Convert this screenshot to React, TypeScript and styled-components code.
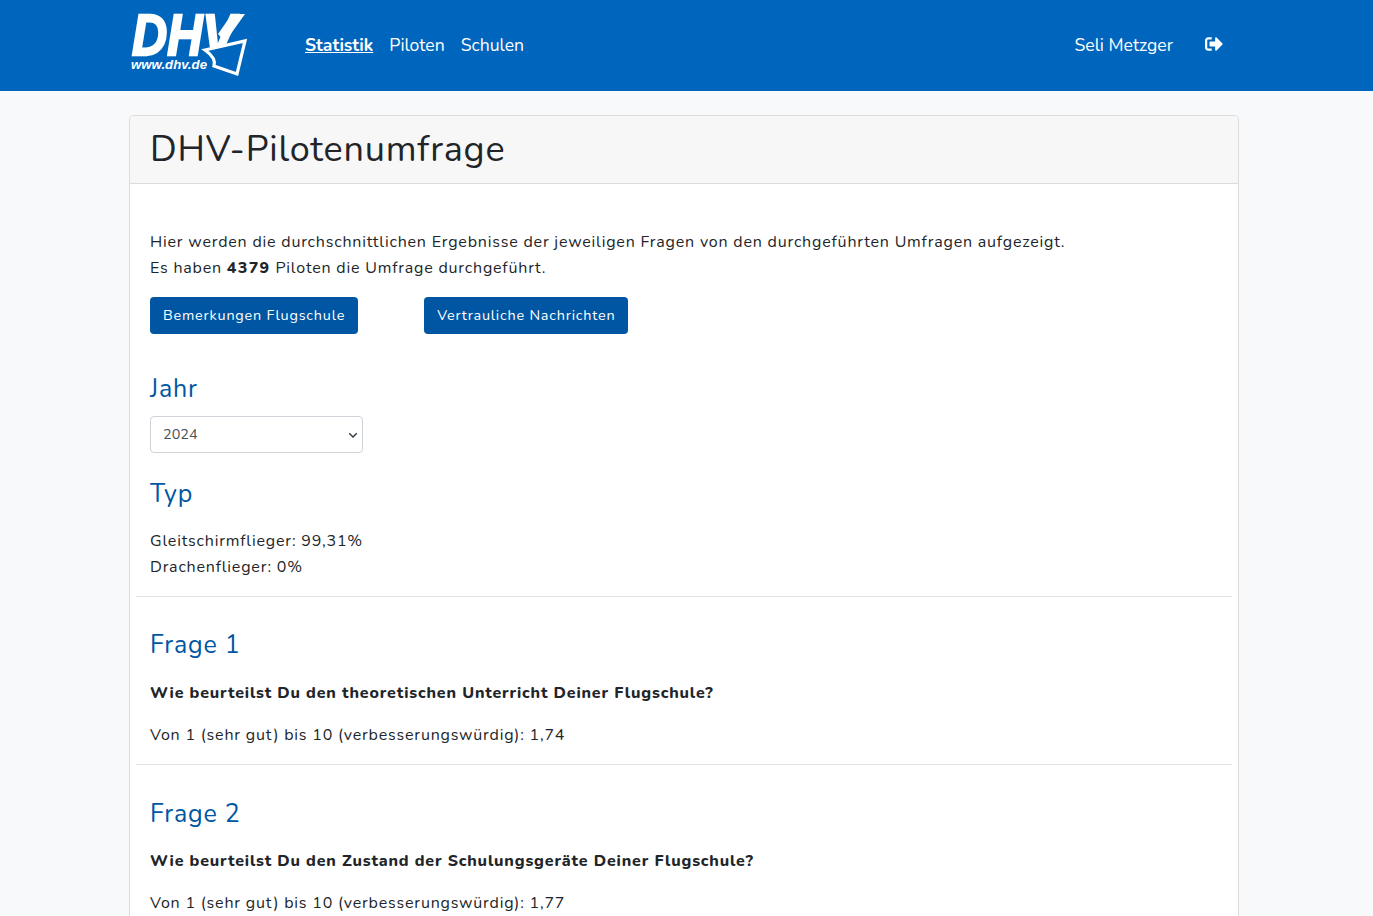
import React from "react";
import styled, { createGlobalStyle } from "styled-components";
import { FaSignOutAlt } from "react-icons/fa";

const Global = createGlobalStyle`
  html, body { margin: 0; padding: 0; background: #f8f9fa; height: 916px; overflow: hidden; }
  body { font-family: "Nunito", "Noto Sans", "Open Sans", sans-serif; color: #212529; }
`;
const Nav = styled.nav`
  height: 91px; background: #0065bd; display: flex; align-items: center;
  padding: 0 150px 0 130px; box-sizing: border-box;
`;
const Logo = styled.svg`width: 120px; height: 66px; flex: none; margin-top: 2px; overflow: visible;`;
const Links = styled.div`display: flex; gap: 16px; margin-left: 55px; flex: 1; margin-top: -2px;`;
const NavLink = styled.a<{ $active?: boolean }>`
  color: #fff; font-size: 17.6px; text-decoration: ${p => p.$active ? "underline" : "none"};
  font-weight: ${p => p.$active ? 700 : 400};
`;
const User = styled.span`color: #fff; font-size: 17.6px; margin: -2px 32px 0 0;`;
const Logout = styled(FaSignOutAlt)`width: 18px; height: 18px; color: #fff; display: block; margin-top: -3px;`;
const Card = styled.main`
  margin: 24px 0 0 129px; width: 1110px; height: 900px; box-sizing: border-box; background: #fff;
  border: 1px solid #dcdcdc; border-radius: 4px 4px 0 0;
`;
const CardHeader = styled.header`
  height: 68px; box-sizing: border-box; background: #f7f7f7; border-bottom: 1px solid #dcdcdc;
  padding: 0 20px; display: flex; align-items: center; border-radius: 4px 4px 0 0;
`;
const Title = styled.h1`margin: 0; font-size: 36px; font-weight: 400; letter-spacing: 0.8px; color: #212529;`;
const CardBody = styled.div`padding: 45px 20px 0;`;
const Text = styled.p`margin: 0; font-size: 16px; line-height: 26px; letter-spacing: 0.8px; color: #212529;
  b { font-weight: 800; letter-spacing: 1.3px; }
`;
const Buttons = styled.div`display: flex; gap: 66px; margin-top: 16px;`;
const Button = styled.button`
  height: 37px; padding: 0 13px 2px; border: 0; border-radius: 4px; background: #0056a2; color: #fff;
  font: 400 14.4px "Nunito", sans-serif; letter-spacing: 0.8px;
`;
const Heading = styled.h2<{ $top: number; $after?: number }>`
  margin: ${p => p.$top}px 0 ${p => p.$after ?? -1}px; font-size: 25px; line-height: 30px; font-weight: 400; color: #0056a2; letter-spacing: 0.8px;
`;
const SelectBox = styled.div`
  width: 213px; height: 37px; box-sizing: border-box; margin-top: 13px; border: 1px solid #ced4da; border-radius: 4px;
  padding: 0 4px 2px 12px; display: flex; align-items: center; justify-content: space-between;
  font-size: 14.4px; color: #495057;
`;
const Chevron = styled.svg`width: 10px; height: 10px; fill: none; stroke: #343a40; stroke-width: 1.7; margin-top: 2px;`;
const Rule = styled.hr`margin: 16px -14px 0; border: 0; border-top: 1px solid #e2e2e2;`;
const Question = styled.p`margin: 21px 0 0; font-size: 16px; line-height: 26px; letter-spacing: 0.84px; font-weight: 800; color: #212529;`;
const Score = styled(Text)`margin-top: 16px;`;
const TypeList = styled.div`margin-top: 20px;`;

const Frage = ({ n, q, v, top = 33, after = -1 }: { n: number; q: string; v: string; top?: number; after?: number }) => (
  <section>
    <Rule />
    <Heading $top={top} $after={after}>Frage {n}</Heading>
    <Question>{q}</Question>
    <Score>Von 1 (sehr gut) bis 10 (verbesserungswürdig): {v}</Score>
  </section>
);

export default function App() {
  return (
    <>
      <Global />
      <Nav>
        <Logo viewBox="0 0 120 66">
          <text x="2" y="41" fill="#fff" stroke="#fff" strokeWidth="2.4" fontFamily="Liberation Sans" fontWeight="700" fontStyle="italic" fontSize="57" textLength="103" lengthAdjust="spacingAndGlyphs">DHV</text>
          <text x="1" y="54.500" fill="#fff" fontFamily="Liberation Sans" fontWeight="700" fontStyle="italic" fontSize="13" textLength="76" lengthAdjust="spacingAndGlyphs">www.dhv.de</text>
          <path d="M75 36 L115 27 L107 60 L84 52 C86 46 82 41 75 36 Z" fill="#0065bd" stroke="#fff" strokeWidth="3.200" strokeLinejoin="miter" />
          <path d="M95 28 L115 0 L102 0 L88 20 Z" fill="#fff" />
        </Logo>
        <Links>
          <NavLink $active>Statistik</NavLink>
          <NavLink>Piloten</NavLink>
          <NavLink>Schulen</NavLink>
        </Links>
        <User>Seli Metzger</User>
        <Logout />
      </Nav>
      <Card>
        <CardHeader><Title>DHV-Pilotenumfrage</Title></CardHeader>
        <CardBody>
          <Text>Hier werden die durchschnittlichen Ergebnisse der jeweiligen Fragen von den durchgeführten Umfragen aufgezeigt.</Text>
          <Text>Es haben <b>4379</b> Piloten die Umfrage durchgeführt.</Text>
          <Buttons>
            <Button>Bemerkungen Flugschule</Button>
            <Button>Vertrauliche Nachrichten</Button>
          </Buttons>
          <Heading $top={40}>Jahr</Heading>
          <SelectBox>
            2024
            <Chevron viewBox="0 0 12 12"><path d="M1.500 4l4.500 4.500L10.500 4" /></Chevron>
          </SelectBox>
          <Heading $top={26}>Typ</Heading>
          <TypeList>
            <Text>Gleitschirmflieger: 99,31%</Text>
            <Text>Drachenflieger: 0%</Text>
          </TypeList>
          <Frage n={1} q="Wie beurteilst Du den theoretischen Unterricht Deiner Flugschule?" v="1,74" />
          <Frage n={2} top={34} after={-2} q="Wie beurteilst Du den Zustand der Schulungsgeräte Deiner Flugschule?" v="1,77" />
        </CardBody>
      </Card>
    </>
  );
}
